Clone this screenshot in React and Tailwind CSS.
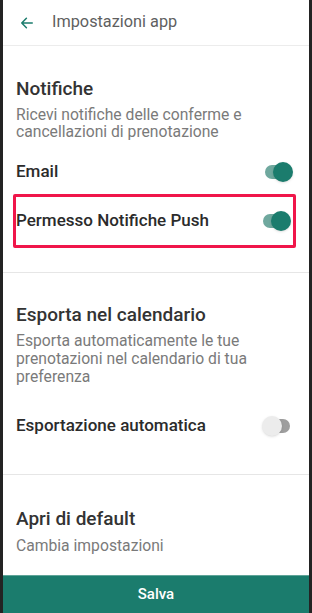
import React, { useState } from "react";

const Toggle = ({ on, onClick }) => (
  <button onClick={onClick} className="relative w-[30px] h-[22px] flex items-center">
    <span
      className={
        on
          ? "absolute left-[2px] w-[24px] h-[14px] rounded-full bg-[#6fa89e]"
          : "absolute left-[4px] w-[24px] h-[14px] rounded-full bg-[#9e9e9e]"
      }
    />
    <span
      className={
        on
          ? "absolute left-[10px] w-[20px] h-[20px] rounded-full bg-[#1b7c6d] shadow"
          : "absolute left-0 w-[20px] h-[20px] rounded-full bg-[#ececec] shadow"
      }
    />
  </button>
);

export default function App() {
  const [email, setEmail] = useState(true);
  const [push, setPush] = useState(true);
  const [auto, setAuto] = useState(false);

  return (
    <div className="h-[613px] w-[312px] bg-[#232323] px-[3px] flex flex-col font-['Roboto',sans-serif]">
      <div className="flex-1 bg-white flex flex-col overflow-hidden">
        {/* header */}
        <div className="h-[46px] flex items-center border-b border-[#ececec] shrink-0">
          <svg className="ml-[17px] w-[14px] h-[14px]" viewBox="0 0 24 24" fill="none" stroke="#1b7c6d" strokeWidth="2.6" strokeLinecap="round" strokeLinejoin="round">
            <path d="M21 12H3M11 4l-8 8 8 8" />
          </svg>
          <span className="ml-[18px] text-[16.3px] text-[#5f5f5f]">Impostazioni app</span>
        </div>

        {/* Notifiche */}
        <div className="pt-[31px] pl-[10px] pr-[13px]">
          <h2 className="px-[3px] text-[19px] font-medium text-[#333] leading-[24px]">Notifiche</h2>
          <p className="px-[3px] mt-[5px] text-[15.7px] text-[#7a7a7a] leading-[17px]">
            Ricevi notifiche delle conferme e cancellazioni di prenotazione
          </p>
          <div className="mt-[10px] h-[44px] px-[3px] flex items-center justify-between">
            <span className="text-[17px] font-medium text-[#2b2b2b]">Email</span>
            <Toggle on={email} onClick={() => setEmail(!email)} />
          </div>
          <div className="h-[54px] border-[3px] border-[#f0164a] rounded-[2px] pr-[2px] flex items-center justify-between">
            <span className="text-[17px] font-medium text-[#2b2b2b]">Permesso Notifiche Push</span>
            <Toggle on={push} onClick={() => setPush(!push)} />
          </div>
        </div>

        <div className="mt-[24px] border-t border-[#e6e6e6]" />

        {/* Esporta */}
        <div className="pt-[30px] px-[13px]">
          <h2 className="text-[19px] font-medium text-[#333] leading-[24px]">Esporta nel calendario</h2>
          <p className="mt-[5px] text-[15.7px] text-[#7a7a7a] leading-[18px]">
            Esporta automaticamente le tue prenotazioni nel calendario di tua preferenza
          </p>
          <div className="mt-[18px] h-[44px] flex items-center justify-between pr-[4px]">
            <span className="text-[17px] font-medium text-[#2b2b2b]">Esportazione automatica</span>
            <Toggle on={auto} onClick={() => setAuto(!auto)} />
          </div>
        </div>

        <div className="mt-[26px] border-t border-[#e6e6e6]" />

        {/* Apri di default */}
        <div className="pt-[32px] px-[13px]">
          <h2 className="text-[19px] font-medium text-[#333] leading-[24px]">Apri di default</h2>
          <p className="mt-[6px] text-[15.7px] text-[#7a7a7a] leading-[18px]">Cambia impostazioni</p>
        </div>

        <button className="mt-auto h-[38px] shrink-0 bg-[#1b7c6d] border-t border-[#5fa498] text-white text-[15px] font-medium">
          Salva
        </button>
      </div>
    </div>
  );
}
